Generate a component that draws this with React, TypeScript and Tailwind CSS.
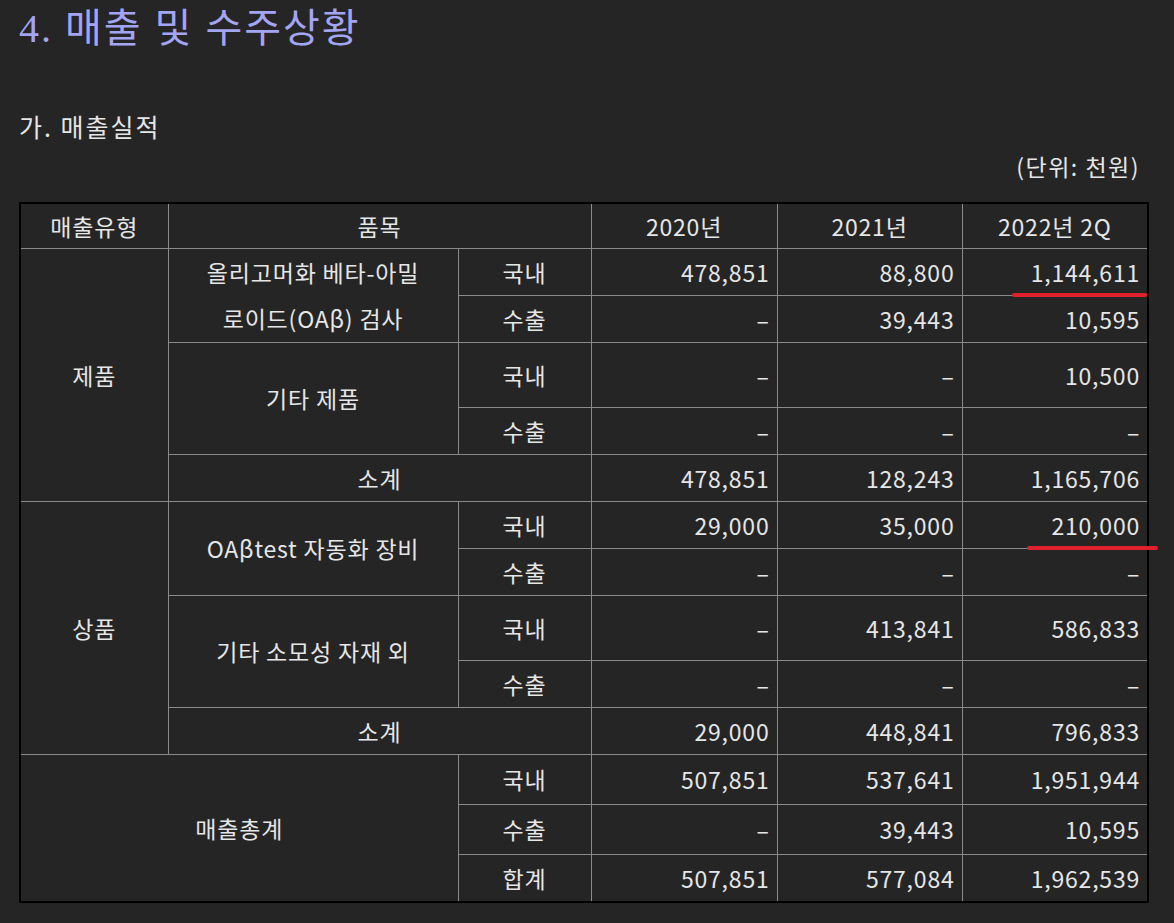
import React from "react";

const B = "border border-[#8a8a8a]";
type C = { t: string; cs?: number; rs?: number; a?: "l" | "c" | "r" };
const rows: { h: number; cells: C[] }[] = [
  { h: 47, cells: [{ t: "제품", rs: 5, a: "c" }, { t: "올리고머화 베타-아밀\n로이드(OAβ) 검사", rs: 2, a: "c" }, { t: "국내", a: "c" }, { t: "478,851" }, { t: "88,800" }, { t: "1,144,611" }] },
  { h: 47, cells: [{ t: "수출", a: "c" }, { t: "–" }, { t: "39,443" }, { t: "10,595" }] },
  { h: 65, cells: [{ t: "기타 제품", rs: 2, a: "c" }, { t: "국내", a: "c" }, { t: "–" }, { t: "–" }, { t: "10,500" }] },
  { h: 46, cells: [{ t: "수출", a: "c" }, { t: "–" }, { t: "–" }, { t: "–" }] },
  { h: 47, cells: [{ t: "소계", cs: 2, a: "c" }, { t: "478,851" }, { t: "128,243" }, { t: "1,165,706" }] },
  { h: 46, cells: [{ t: "상품", rs: 5, a: "c" }, { t: "OAβtest 자동화 장비", rs: 2, a: "c" }, { t: "국내", a: "c" }, { t: "29,000" }, { t: "35,000" }, { t: "210,000" }] },
  { h: 46, cells: [{ t: "수출", a: "c" }, { t: "–" }, { t: "–" }, { t: "–" }] },
  { h: 65, cells: [{ t: "기타 소모성 자재 외", rs: 2, a: "c" }, { t: "국내", a: "c" }, { t: "–" }, { t: "413,841" }, { t: "586,833" }] },
  { h: 46, cells: [{ t: "수출", a: "c" }, { t: "–" }, { t: "–" }, { t: "–" }] },
  { h: 46, cells: [{ t: "소계", cs: 2, a: "c" }, { t: "29,000" }, { t: "448,841" }, { t: "796,833" }] },
  { h: 50, cells: [{ t: "매출총계", cs: 2, rs: 3, a: "c" }, { t: "국내", a: "c" }, { t: "507,851" }, { t: "537,641" }, { t: "1,951,944" }] },
  { h: 50, cells: [{ t: "수출", a: "c" }, { t: "–" }, { t: "39,443" }, { t: "10,595" }] },
  { h: 46, cells: [{ t: "합계", a: "c" }, { t: "507,851" }, { t: "577,084" }, { t: "1,962,539" }] },
];

export default function App() {
  return (
    <div className="relative w-[1174px] h-[923px] bg-[#252525] text-[#e6e6e6] overflow-hidden" style={{ fontFamily: '"Noto Sans CJK KR", "Noto Sans", sans-serif' }}>
      <div className="pl-[19px] pt-[4px] text-[40px] leading-[50px] tracking-[2px] text-[#a4a4f4]" style={{ fontFamily: '"Liberation Serif", "Noto Sans CJK KR", serif' }}>4. 매출 및 수주상황</div>
      <div className="pl-[19px] mt-[56px] text-[25px] leading-[32px] tracking-[2px]">가. 매출실적</div>
      <div className="text-right pr-[34px] mt-[9px] text-[23px] leading-[30px] tracking-[1.5px]">(단위: 천원)</div>
      <table className="ml-[19px] mt-[21px] border-collapse border-2 border-black text-[23px] tracking-[0.8px] table-fixed w-[1128px]">
        <colgroup>
          <col className="w-[148px]" /><col className="w-[290px]" /><col className="w-[133px]" /><col className="w-[186px]" /><col className="w-[185px]" /><col className="w-[186px]" />
        </colgroup>
        <tbody>
          <tr className="h-[45px]">
            <td className={B + " text-center"}>매출유형</td>
            <td className={B + " text-center"} colSpan={2}>품목</td>
            <td className={B + " text-center"}>2020년</td>
            <td className={B + " text-center"}>2021년</td>
            <td className={B + " text-center"}>2022년 2Q</td>
          </tr>
          {rows.map((r, i) => (
            <tr key={i} style={{ height: r.h }}>
              {r.cells.map((c, j) => (
                <td key={j} colSpan={c.cs} rowSpan={c.rs} className={B + " leading-[46px] px-[7px] whitespace-pre-line " + (c.a === "c" ? "text-center" : "text-right")}>{c.t}</td>
              ))}
            </tr>
          ))}
        </tbody>
      </table>
      <div className="absolute left-[1012px] top-[293px] w-[135px] h-[4px] rounded-full bg-[#e0202a]" />
      <div className="absolute left-[1027px] top-[546px] w-[131px] h-[4px] rounded-full bg-[#e0202a]" />
    </div>
  );
}
